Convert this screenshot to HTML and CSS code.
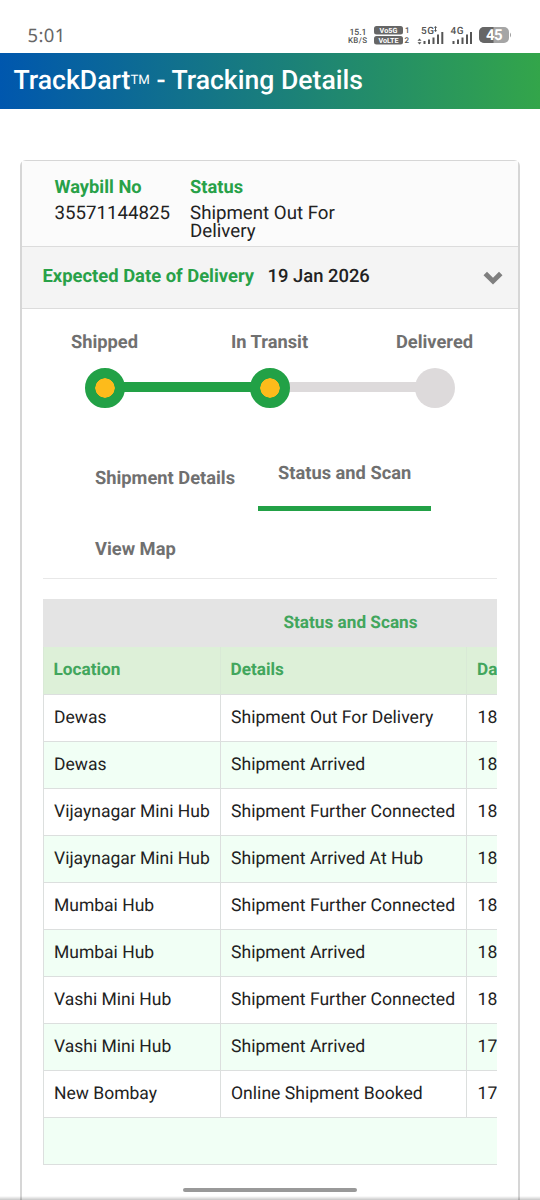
FILE: index.html
```html
<!DOCTYPE html>
<html lang="en">
<head>
<meta charset="utf-8">
<title>TrackDart - Tracking Details</title>
<link rel="stylesheet" href="styles.css">
</head>
<body>
<div class="statusbar">
  <span class="clock">5:01</span>
  <svg class="indicators" width="164" height="24" viewBox="0 0 164 24">
    <g class="ind-text">
      <text x="1.500" y="10.500" font-size="8.700" textLength="17">15.1</text>
      <text x="0" y="18.500" font-size="8" textLength="19">KB/S</text>
      <text x="57" y="9" font-size="8">1</text>
      <text x="56.500" y="19" font-size="8">2</text>
      <text x="73" y="10" font-size="10" textLength="13">5G</text>
      <text x="102.500" y="10" font-size="10" textLength="13">4G</text>
    </g>
    <rect x="26" y="2" width="29" height="8.500" rx="2.500" fill="#666"/>
    <rect x="26" y="12" width="29" height="8.500" rx="2.500" fill="#666"/>
    <text class="badge-text" x="31.500" y="8.800" textLength="18">Vo5G</text>
    <text class="badge-text" x="30.500" y="18.800" textLength="20">VoLTE</text>
    <g fill="#555">
      <path d="M87.500 2l1.700 1.700h-1.200v2.600h1.200l-1.700 1.700-1.700-1.700h1.200v-2.600h-1.200zM71.500 14.500l2 2.300h-4zM71.500 20.500l2-2.300h-4z"/>
      <path d="M75.500 17h2v3h-2zM80 15.500h2v4.500h-2zM84.500 13.500h2v6.500h-2zM89 10.500h2v9.500h-2zM93.300 8h2v12h-2z"/>
      <path d="M104.500 17h2v3h-2zM109 15.500h2v4.500h-2zM113.500 13.500h2v6.500h-2zM118 10.500h2v9.500h-2zM122 8h2v12h-2z"/>
    </g>
    <rect x="131" y="3" width="30" height="16" rx="5" fill="#a5a5a5"/>
    <path d="M136 3h9.500v16h-9.500a5 5 0 0 1-5-5v-6a5 5 0 0 1 5-5z" fill="#666"/>
    <path d="M162 8.500q2 2.500 0 5z" fill="#999"/>
    <text class="battery" x="138" y="16.300" textLength="16.500">45</text>
  </svg>
</div>
<header class="titlebar"><h1>TrackDart<span class="tm">TM</span> - Tracking Details</h1></header>
<main class="card">
  <section class="summary">
    <div><h2>Waybill No</h2><p class="waybill">35571144825</p></div>
    <div class="summary-status"><h2>Status</h2><p>Shipment Out For Delivery</p></div>
  </section>
  <section class="expected">
    <span class="expected-label">Expected Date of Delivery</span>
    <span class="expected-date">19 Jan 2026</span>
    <svg class="chevron" width="20" height="14" viewBox="0 0 20 14"><path d="M.500 4.300L4 .800l6 6 6-6 3.500 3.500L10 13.500z" fill="#7f7f7f"/></svg>
  </section>
  <section class="content">
    <ol class="progress">
      <li class="step done"><span class="step-label">Shipped</span><i class="dot"></i></li>
      <li class="step done"><span class="step-label">In Transit</span><i class="dot"></i></li>
      <li class="step"><span class="step-label">Delivered</span><i class="dot"></i></li>
    </ol>
    <nav class="tabs">
      <a class="tab">Shipment Details</a>
      <a class="tab active">Status and Scan</a>
      <a class="tab map">View Map</a>
    </nav>
    <div class="table-wrap">
      <table>
        <colgroup><col class="c1"><col class="c2"><col class="c3"><col class="c4"></colgroup>
        <thead>
          <tr class="caption"><th colspan="4">Status and Scans</th></tr>
          <tr class="heads"><th>Location</th><th>Details</th><th>Da</th><th></th></tr>
        </thead>
        <tbody>
          <tr><td>Dewas</td><td>Shipment Out For Delivery</td><td>18</td><td></td></tr>
          <tr><td>Dewas</td><td>Shipment Arrived</td><td>18</td><td></td></tr>
          <tr><td>Vijaynagar Mini Hub</td><td>Shipment Further Connected</td><td>18</td><td></td></tr>
          <tr><td>Vijaynagar Mini Hub</td><td>Shipment Arrived At Hub</td><td>18</td><td></td></tr>
          <tr><td>Mumbai Hub</td><td>Shipment Further Connected</td><td>18</td><td></td></tr>
          <tr><td>Mumbai Hub</td><td>Shipment Arrived</td><td>18</td><td></td></tr>
          <tr><td>Vashi Mini Hub</td><td>Shipment Further Connected</td><td>18</td><td></td></tr>
          <tr><td>Vashi Mini Hub</td><td>Shipment Arrived</td><td>17</td><td></td></tr>
          <tr><td>New Bombay</td><td>Online Shipment Booked</td><td>17</td><td></td></tr>
          <tr><td colspan="4"></td></tr>
        </tbody>
      </table>
    </div>
  </section>
</main>
<div class="gesture"></div>
</body>
</html>
```
FILE: styles.css
```css
* { box-sizing: border-box; }
html, body { height: 1200px; overflow: hidden; }
body { margin: 0; background: #fff; font-family: Roboto, "Liberation Sans", sans-serif; color: #222; text-rendering: geometricPrecision; }
h1, h2, p, ol { margin: 0; padding: 0; }

.statusbar { height: 53px; padding: 24px 28px 0 27.5px; display: flex; justify-content: space-between; }
.clock { font: 400 18.5px/24px "Noto Sans", sans-serif; letter-spacing: .35px; color: #666; }
.indicators { flex: none; }
.ind-text { fill: #555; font-weight: 500; }
.badge-text { fill: #fff; font-size: 7.2px; font-weight: 700; }
.battery { fill: #fff; font-size: 15px; font-weight: 700; }

.titlebar { height: 56px; padding-left: 13.5px; background: linear-gradient(90deg, #0057ae, #33a54a); }
.titlebar h1 { font-size: 26.6px; line-height: 56px; font-weight: 500; color: #fff; white-space: nowrap; }
.tm { font-size: 13.2px; font-weight: 400; vertical-align: 5px; }

.card { width: 500px; height: 1060px; margin: 51px 0 0 20px; border: 2px solid #d6d6d6; border-top-width: 1px; border-radius: 6px 6px 0 0; }
.summary { height: 85px; padding: 17px 32px 0 32.5px; display: flex; gap: 20px; background: #fbfbfb; }
.summary h2 { font-size: 18.3px; line-height: 20px; font-weight: 700; color: #28a148; }
.summary p { margin-top: 6px; font-size: 18.7px; line-height: 18px; }
.summary-status { width: 170px; }
.expected { height: 63px; padding: 0 15px 3px 20.5px; display: flex; align-items: center; background: #f4f4f4; border: solid #dcdcdc; border-width: 1px 0; font-size: 18.4px; }
.expected-label { font-weight: 700; color: #28a148; }
.expected-date { margin-left: 13.5px; font-weight: 500; }
.chevron { margin-left: auto; position: relative; top: 2px; }

.content { padding: 23px 21px 0 20.5px; }
.progress { display: flex; list-style: none; margin: 0 -20.5px; }
.step { width: 165px; display: flex; flex-direction: column; align-items: center; gap: 15px; position: relative; }
.step-label { font-size: 18.3px; line-height: 21px; font-weight: 700; color: #707070; }
.dot { width: 40px; height: 40px; border-radius: 50%; background: #dddadb; z-index: 1; }
.done .dot { border: 10.5px solid #22a146; background: radial-gradient(circle, #fdbb1b 9.5px, #22a146 10px) border-box; }
.step + .step::before { content: ""; position: absolute; left: -82px; width: 165px; top: 50px; height: 10px; background: #dddadb; }
.step.done + .done::before { background: #22a146; }

.tabs { display: grid; grid-template-columns: 173px 173px; margin-top: 50px; padding-left: 42.5px; grid-template-rows: 53px 67px; border-bottom: 1px solid #e8e8e8; height: 121px; }
.tab { font-size: 18.3px; line-height: 22px; font-weight: 700; color: #707070; padding: 10px 10px 0; white-space: nowrap; }
.tab.active { padding: 5px 20px 0; border-bottom: 5px solid #22a146; }
.tab.map { padding-top: 28px; }

.table-wrap { margin-top: 20px; overflow: hidden; }
table { width: 615px; table-layout: fixed; border-collapse: separate; border-spacing: 0; font-size: 17.6px; }
.c1 { width: 177px; } .c2 { width: 246.5px; } .c3 { width: 95px; } .c4 { width: 96.5px; }
th, td { height: 47.1px; padding: 0 10px; border: solid #dcdfde; border-width: 0 0 1px 1px; text-align: left; vertical-align: middle; white-space: nowrap; line-height: 20px; }
td { padding-left: 10.5px; }
td:first-child { font-size: 17.5px; }
th { color: #42a65d; font-weight: 700; font-size: 17.2px; }
.caption th { height: 48px; background: #e4e4e4; text-align: center; border-color: #e4e4e4; }
.heads th { height: 47.5px; background: #ddf0d8; border-left-color: #d9e9d6; }
tbody tr:nth-child(even) td { background: #f1fff5; }

.gesture { position: absolute; left: 183px; top: 1188px; width: 174px; height: 4px; border-radius: 2px; background: #999; }
body::after { content: ""; position: absolute; left: 0; right: 0; top: 1196px; height: 4px; background: linear-gradient(rgba(0,0,0,0), rgba(0,0,0,.22)); }
```
